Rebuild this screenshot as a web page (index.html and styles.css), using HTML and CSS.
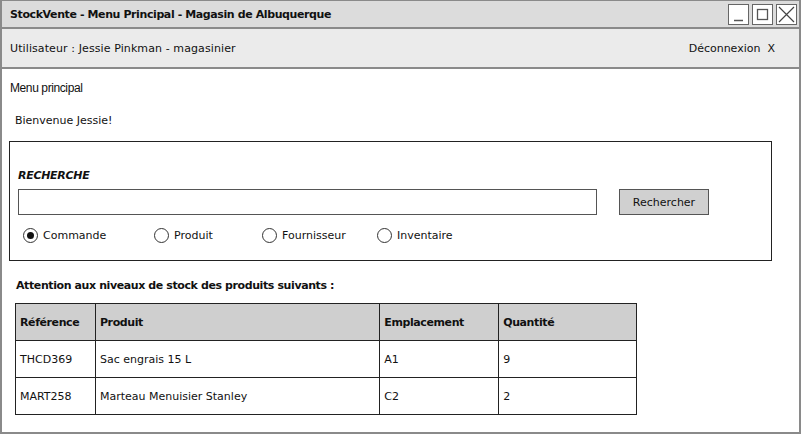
FILE: index.html
```html
<!DOCTYPE html>
<html lang="fr">
<head>
<meta charset="utf-8">
<title>StockVente</title>
<link rel="stylesheet" href="styles.css">
</head>
<body>
<div class="window">
  <div class="titlebar">
    <span class="title">StockVente - Menu Principal - Magasin de Albuquerque</span>
    <div class="winbtns">
      <span class="wb"><svg width="19" height="19" viewBox="0 0 19 19"><path d="M5 15.5h9" stroke="#555" stroke-width="1.5"/></svg></span>
      <span class="wb"><svg width="19" height="19" viewBox="0 0 19 19"><rect x="4.5" y="4.5" width="10" height="10" fill="none" stroke="#555" stroke-width="1.3"/></svg></span>
      <span class="wb"><svg width="19" height="19" viewBox="0 0 19 19"><path d="M2 2L17 17M17 2L2 17" stroke="#444" stroke-width="1.2"/></svg></span>
    </div>
  </div>
  <div class="userbar">
    <span class="user">Utilisateur : Jessie Pinkman - magasinier</span>
    <span class="logout">Déconnexion&nbsp; X</span>
  </div>
  <div class="content">
    <div class="crumb">Menu principal</div>
    <div class="welcome">Bienvenue Jessie!</div>
    <div class="searchbox">
      <div class="slabel">RECHERCHE</div>
      <div class="srow">
        <div class="input"></div>
        <div class="btn">Rechercher</div>
      </div>
      <div class="radios">
        <span class="radio r1"><span class="circ on"></span>Commande</span>
        <span class="radio r2"><span class="circ"></span>Produit</span>
        <span class="radio r3"><span class="circ"></span>Fournisseur</span>
        <span class="radio r4"><span class="circ"></span>Inventaire</span>
      </div>
    </div>
    <div class="warn">Attention aux niveaux de stock des produits suivants :</div>
    <table class="grid">
      <thead>
        <tr><th class="c1">Référence</th><th class="c2">Produit</th><th class="c3">Emplacement</th><th class="c4">Quantité</th></tr>
      </thead>
      <tbody>
        <tr><td>THCD369</td><td>Sac engrais 15 L</td><td>A1</td><td>9</td></tr>
        <tr><td>MART258</td><td>Marteau Menuisier Stanley</td><td>C2</td><td>2</td></tr>
      </tbody>
    </table>
  </div>
</div>
</body>
</html>
```

FILE: styles.css
```css
* { box-sizing: border-box; }
html, body { margin: 0; padding: 0; background: #fff; }
body {
  width: 801px; height: 434px; overflow: hidden;
  font-family: "DejaVu Sans", sans-serif;
  font-size: 11px;
  color: #111;
}
.window {
  width: 801px; height: 434px;
  border: 2px solid #8a8a8a;
  border-top: 1px solid #8a8a8a;
  display: flex; flex-direction: column;
}
.titlebar {
  height: 28px;
  background: #dcdcdc;
  border-bottom: 2px solid #8a8a8a;
  display: flex; align-items: center; justify-content: space-between;
  padding-left: 8px; padding-right: 2px;
}
.title { font-weight: bold; font-size: 11px; letter-spacing: -0.4px; }
.winbtns { display: flex; gap: 3px; }
.wb {
  width: 21px; height: 21px;
  border: 1px solid #666; background: #fff;
  display: flex; align-items: center; justify-content: center;
}
.userbar {
  height: 40px;
  background: #ebebeb;
  border-bottom: 2px solid #8a8a8a;
  display: flex; align-items: center; justify-content: space-between;
  padding: 0 24px 0 8px;
}
.user { letter-spacing: 0.1px; }
.content { padding: 12px 0 0 7px; }
.crumb {
  font-family: "Liberation Sans Narrow", "Liberation Sans", sans-serif;
  font-size: 12px; letter-spacing: -0.4px;
  height: 18px; padding-left: 1px;
}
.welcome { margin: 15px 0 0 6px; height: 16px; }
.searchbox {
  margin-top: 11px;
  width: 763px; height: 120px;
  border: 1px solid #222;
  padding: 27px 0 0 8px;
}
.slabel { font-weight: bold; font-style: italic; font-size: 11px; height: 14px; letter-spacing: -0.3px; }
.srow { display: flex; margin-top: 6px; }
.input { width: 579px; height: 26px; border: 1px solid #555; background: #fff; }
.btn {
  margin-left: 22px;
  width: 90px; height: 26px;
  border: 1px solid #555; background: #d0d0d0;
  display: flex; align-items: center; justify-content: center;
}
.radios { display: flex; margin-top: 11px; padding-left: 5px; height: 18px; align-items: center; }
.radio { display: flex; align-items: center; gap: 5px; }
.r1 { width: 131px; } .r2 { width: 108px; } .r3 { width: 115px; }
.circ {
  width: 15px; height: 15px; border: 1px solid #333; border-radius: 50%;
  display: inline-flex; align-items: center; justify-content: center;
}
.circ.on::after { content: ""; width: 7px; height: 7px; border-radius: 50%; background: #111; }
.warn { font-weight: bold; margin: 18px 0 0 7px; height: 14px; letter-spacing: -0.4px; }
.grid {
  margin: 10px 0 0 6px;
  border-collapse: collapse;
  width: 622px;
}
.grid th, .grid td {
  border: 1px solid #222;
  height: 37px;
  text-align: left;
  padding: 0 4px;
  vertical-align: middle;
}
.grid th { background: #cfcfcf; font-weight: bold; letter-spacing: -0.4px; }
.c1 { width: 80px; } .c2 { width: 285px; } .c3 { width: 119px; } .c4 { width: 138px; }
```
